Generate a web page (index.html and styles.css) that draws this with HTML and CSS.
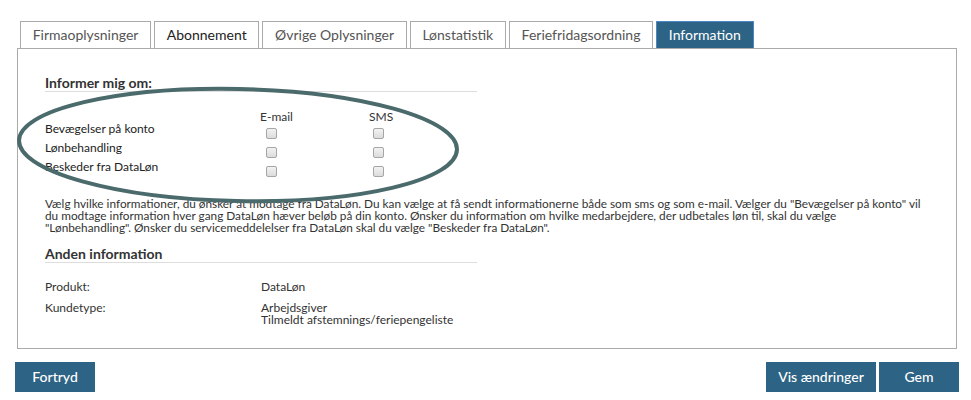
FILE: index.html
```html
<!DOCTYPE html>
<html lang="da">
<head>
<meta charset="utf-8">
<title>Information</title>
<link rel="stylesheet" href="styles.css">
</head>
<body>
<div class="page">
  <nav class="tabs">
    <span class="tab">Firmaoplysninger</span>
    <span class="tab tab-dark">Abonnement</span>
    <span class="tab">Øvrige Oplysninger</span>
    <span class="tab">Lønstatistik</span>
    <span class="tab">Feriefridagsordning</span>
    <span class="tab tab-active">Information</span>
  </nav>
  <div class="panel">
    <section class="section">
      <h2 class="heading">Informer mig om:</h2>
      <div class="notify">
        <span></span>
        <span class="col-head">E-mail</span>
        <span class="col-head">SMS</span>

        <span class="row-label">Bevægelser på konto</span>
        <span class="cell cell-mail"><input type="checkbox" class="chk"></span>
        <span class="cell cell-sms"><input type="checkbox" class="chk"></span>

        <span class="row-label">Lønbehandling</span>
        <span class="cell cell-mail"><input type="checkbox" class="chk"></span>
        <span class="cell cell-sms"><input type="checkbox" class="chk"></span>

        <span class="row-label">Beskeder fra DataLøn</span>
        <span class="cell cell-mail"><input type="checkbox" class="chk"></span>
        <span class="cell cell-sms"><input type="checkbox" class="chk"></span>
      </div>
    </section>
    <p class="desc">Vælg hvilke informationer, du ønsker at modtage fra DataLøn. Du kan vælge at få sendt informationerne både som sms og som e-mail. Vælger du "Bevægelser på konto" vil du modtage information hver gang DataLøn hæver beløb på din konto. Ønsker du information om hvilke medarbejdere, der udbetales løn til, skal du vælge "Lønbehandling". Ønsker du servicemeddelelser fra DataLøn skal du vælge "Beskeder fra DataLøn".</p>
    <section class="section">
      <h2 class="heading heading-2">Anden information</h2>
      <dl class="facts">
        <dt>Produkt:</dt>
        <dd>DataLøn</dd>
        <dt>Kundetype:</dt>
        <dd><span class="fact-line">Arbejdsgiver</span><span class="fact-line">Tilmeldt afstemnings/feriepengeliste</span></dd>
      </dl>
    </section>
    <svg class="annot" width="460" height="170" viewBox="0 0 460 170" aria-hidden="true">
      <ellipse cx="220" cy="96" rx="219" ry="56" transform="rotate(1.2 220 96)" fill="none" stroke="#4b6a6c" stroke-width="4"/>
    </svg>
  </div>
  <div class="actions">
    <button class="btn">Fortryd</button>
    <div class="actions-right">
      <button class="btn btn-wide">Vis ændringer</button>
      <button class="btn">Gem</button>
    </div>
  </div>
</div>
</body>
</html>
```
FILE: styles.css
```css
* { box-sizing: border-box; }
html, body { margin: 0; padding: 0; background: #fff; }
body {
  font-family: Lato, "Open Sans", "Liberation Sans", sans-serif;
  color: #333;
}
.page {
  padding: 21px 12px 0 15px;
  width: 971px;
}
.tabs {
  display: flex;
  gap: 3px;
  margin-left: 5px;
  height: 27px;
}
.tab {
  height: 27px;
  padding: 0 11.7px;
  border: 1px solid #aaa;
  border-bottom: none;
  font-size: 14px;
  line-height: 26px;
  color: #555;
  background: #fff;
  white-space: nowrap;
}
.tab-dark { color: #222; }
.tab-active {
  background: #2d6384;
  border: 1px solid #4f86c6;
  border-bottom: none;
  color: #fff;
}
.panel {
  position: relative;
  margin: 0 2px;
  border: 1px solid #aaa;
  height: 301px;
  padding: 25px 27px 0 27px;
}
.section { width: 432px; }
.heading {
  margin: 0;
  font-size: 14px;
  font-weight: 700;
  line-height: 17px;
  color: #333;
  border-bottom: 1px solid #ddd;
}
.notify {
  display: grid;
  grid-template-columns: 215px 109px 60px;
  grid-template-rows: 12px 19px 19px 19px;
  margin-top: 19px;
  font-size: 12px;
  line-height: 12px;
}
.col-head { color: #333; }
.row-label { color: #222; }
.cell { padding-top: 5px; }
.cell-mail { padding-left: 6px; }
.cell-sms { padding-left: 4px; }
.chk {
  appearance: none;
  -webkit-appearance: none;
  display: block;
  margin: 0;
  width: 11px;
  height: 11px;
  border: 1px solid #a6a6a6;
  border-radius: 2px;
  background: linear-gradient(#f2f2f2, #dcdcdc);
}
.desc {
  margin: 18px 0 0 0;
  width: 880px;
  font-size: 11.8px;
  line-height: 12px;
  color: #333;
}
.heading-2 { margin-top: 11px; }
.facts {
  display: grid;
  grid-template-columns: 216px 1fr;
  row-gap: 9px;
  margin: 18px 0 0 0;
  font-size: 12px;
  line-height: 12px;
  color: #333;
}
.facts dt, .facts dd { margin: 0; }
.fact-line { display: block; height: 12px; }
.annot {
  position: absolute;
  left: 0;
  top: 0;
  overflow: visible;
  pointer-events: none;
}
.actions {
  display: flex;
  justify-content: space-between;
  margin-top: 13px;
}
.actions-right { display: flex; gap: 3px; }
.btn {
  width: 80px;
  height: 30px;
  border: none;
  padding: 0;
  background: #2d6384;
  color: #fff;
  font-family: Lato, "Open Sans", "Liberation Sans", sans-serif;
  font-size: 14px;
  font-weight: 500;
  line-height: 30px;
  text-align: center;
}
.btn-wide { width: 110px; }
```
